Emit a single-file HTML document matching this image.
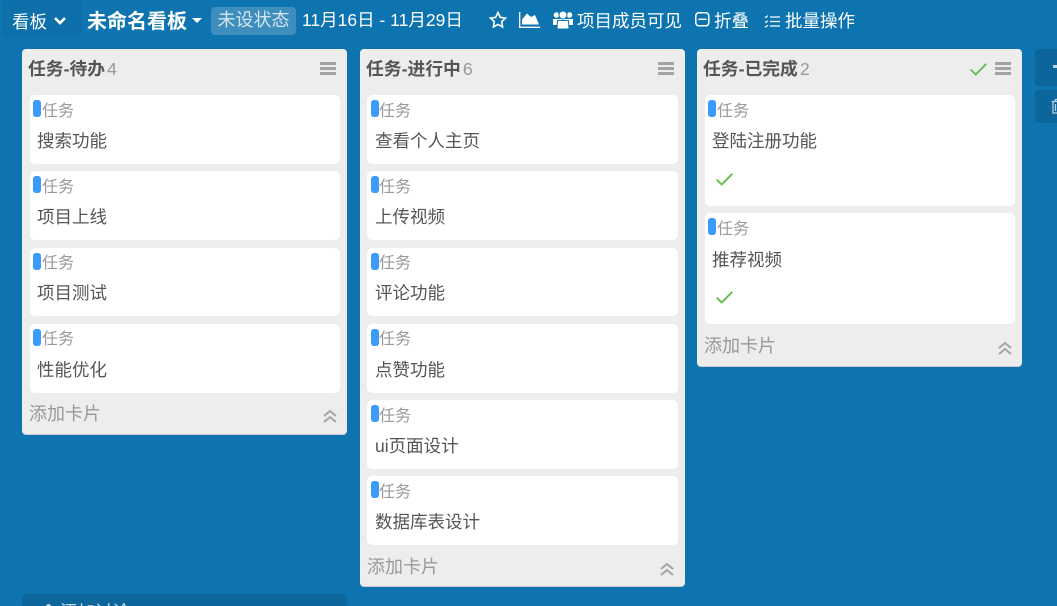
<!DOCTYPE html>
<html lang="zh"><head><meta charset="utf-8"><style>
*{box-sizing:border-box}
html,body{margin:0;padding:0;width:1057px;height:606px;overflow:hidden;background:#0d74b0;font-family:"Liberation Sans","Noto Sans CJK SC",sans-serif}
#w{position:relative;width:1057px;height:606px;overflow:hidden;background:#0d74b0}
.a{position:absolute;white-space:nowrap}
.t{color:#fff;font-size:17.5px;line-height:24px}
.col{position:absolute;width:325px;top:49px;background:#ededed;border-radius:4px;box-shadow:0 1px 0 #ccc}
.h{position:absolute;left:6px;top:8px;font-size:17.8px;line-height:24px;font-weight:bold;color:#555;white-space:nowrap}
.h span{font-weight:normal;color:#999;margin-left:2px}
.m{position:absolute;right:11px;top:13px;width:16px;height:13px;border-top:3px solid #a3a3a3;border-bottom:3px solid #a3a3a3}
.m:before{content:"";position:absolute;left:0;right:0;top:2px;height:3px;background:#a3a3a3}
.c{position:absolute;left:8px;width:310px;height:69px;background:#fff;border-radius:5px}
.c:before{content:"";position:absolute;left:3px;top:5px;width:8px;height:17px;background:#3b9bfb;border-radius:3px}
.l{position:absolute;left:12px;top:6px;font-size:16px;line-height:22px;color:#999;white-space:nowrap}
.n{position:absolute;left:7px;top:33px;font-size:17.5px;line-height:26px;color:#555;white-space:nowrap}
.add{position:absolute;left:7px;font-size:18px;line-height:24px;color:#999;white-space:nowrap}
.k .c{width:311px;left:7px}
.k .c:before{left:4px}
.k .n{left:8px}
svg{position:absolute;overflow:visible}
</style></head><body><div id="w">

<div class="a" style="left:2px;top:0;width:80px;height:38px;background:#0d70aa;border-radius:0 0 5px 5px"></div>
<div class="a t" style="left:12px;top:10px">看板</div>
<svg style="left:53px;top:16px" width="14" height="10" viewBox="0 0 14 10"><path d="M2 2l5 5 5-5" fill="none" stroke="#fff" stroke-width="2.600"/></svg>
<div class="a t" style="left:87px;top:10px;font-size:20px;font-weight:bold">未命名看板</div>
<div class="a" style="left:192px;top:18px;width:0;height:0;border-left:5px solid transparent;border-right:5px solid transparent;border-top:5px solid #fff"></div>
<div class="a" style="left:211px;top:7px;width:85px;height:28px;background:#3d8dbd;border-radius:4px;color:#d4e5f0;font-size:18px;line-height:27px;text-align:center">未设状态</div>
<div class="a t" style="left:302px;top:8px">11月16日 - 11月29日</div>

<svg style="left:489px;top:11px" width="18" height="18" viewBox="0 0 18 18"><path d="M9 1.500l2.300 4.900 5.200.7-3.800 3.600.9 5.300L9 13.400l-4.600 2.600.9-5.300L1.500 7.100l5.200-.7z" fill="none" stroke="#fff" stroke-width="1.600"/></svg>
<svg style="left:519px;top:12px" width="21" height="16" viewBox="0 0 21 16"><path d="M.7 0v15.300H21" fill="none" stroke="#fff" stroke-width="1.300"/><path d="M3 12.500V7.500L8 1.500l4 3.500 4-2 4 9.500z" fill="#fff"/></svg>
<svg style="left:553px;top:10px" width="20" height="19" viewBox="0 0 20 19"><circle cx="3.500" cy="5" r="2.800" fill="#fff"/><circle cx="16.500" cy="5" r="2.800" fill="#fff"/><path d="M0 9h20v6H0z" fill="#fff"/><circle cx="10" cy="5" r="4" fill="#fff" stroke="#0d74b0" stroke-width="1"/><path d="M4.500 10.500h11l.5 8.500H4z" fill="#fff" stroke="#0d74b0" stroke-width="1"/></svg>
<div class="a t" style="left:577px;top:9px">项目成员可见</div>
<svg style="left:695px;top:12px" width="15" height="15" viewBox="0 0 15 15"><rect x=".8" y=".8" width="13" height="13" rx="3" fill="none" stroke="#fff" stroke-width="1.500"/><path d="M3.500 7.300h8" stroke="#fff" stroke-width="1.500"/></svg>
<div class="a t" style="left:714px;top:9px">折叠</div>
<svg style="left:764px;top:14px" width="16" height="14" viewBox="0 0 16 14"><path d="M6 3h10M6 7.500h10M6 12h10" stroke="#fff" stroke-width="1.200"/><path d="M1 2.500l1 1 2-2M1 7.500l1 1 2-2M1 12l1 1 2-2" fill="none" stroke="#fff" stroke-width="1"/></svg>
<div class="a t" style="left:785px;top:9px">批量操作</div>

<!-- column 1 -->
<div class="col" style="left:22px;height:385px">
<div class="h">任务-待办<span>4</span></div><div class="m"></div>
<div class="c" style="top:46px"><div class="l">任务</div><div class="n">搜索功能</div></div>
<div class="c" style="top:122px"><div class="l">任务</div><div class="n">项目上线</div></div>
<div class="c" style="top:199px;height:68px"><div class="l" style="top:5px">任务</div><div class="n" style="top:32px">项目测试</div></div>
<div class="c" style="top:275px"><div class="l" style="top:5px">任务</div><div class="n">性能优化</div></div>
<div class="add" style="top:353px">添加卡片</div>
<svg style="left:301px;top:360px" width="14" height="14" viewBox="0 0 14 14"><path d="M1 7l6-5 6 5M1 13l6-5 6 5" fill="none" stroke="#a3a3a3" stroke-width="2"/></svg>
</div>

<!-- column 2 -->
<div class="col k" style="left:360px;height:537px">
<div class="h">任务-进行中<span>6</span></div><div class="m"></div>
<div class="c" style="top:46px"><div class="l">任务</div><div class="n">查看个人主页</div></div>
<div class="c" style="top:122px"><div class="l">任务</div><div class="n">上传视频</div></div>
<div class="c" style="top:199px;height:68px"><div class="l" style="top:5px">任务</div><div class="n" style="top:32px">评论功能</div></div>
<div class="c" style="top:275px"><div class="l" style="top:5px">任务</div><div class="n">点赞功能</div></div>
<div class="c" style="top:351px"><div class="l">任务</div><div class="n">ui页面设计</div></div>
<div class="c" style="top:427px"><div class="l">任务</div><div class="n">数据库表设计</div></div>
<div class="add" style="top:506px">添加卡片</div>
<svg style="left:300px;top:513px" width="14" height="14" viewBox="0 0 14 14"><path d="M1 7l6-5 6 5M1 13l6-5 6 5" fill="none" stroke="#a3a3a3" stroke-width="2"/></svg>
</div>

<!-- column 3 -->
<div class="col" style="left:697px;height:317px">
<div class="h">任务-已完成<span>2</span></div><div class="m"></div>
<svg style="left:273px;top:14px" width="17" height="13" viewBox="0 0 17 13"><path d="M.7 6.500l5 5L16.300.8" fill="none" stroke="#62bf4b" stroke-width="1.900"/></svg>
<div class="c" style="top:46px;height:111px"><div class="l">任务</div><div class="n">登陆注册功能</div>
<svg style="left:11px;top:78px" width="17" height="13" viewBox="0 0 17 13"><path d="M.7 6.500l5 5L16.300.8" fill="none" stroke="#62bf4b" stroke-width="1.900"/></svg></div>
<div class="c" style="top:164px;height:111px"><div class="l">任务</div><div class="n" style="top:34px">推荐视频</div>
<svg style="left:11px;top:78px" width="17" height="13" viewBox="0 0 17 13"><path d="M.7 6.500l5 5L16.300.8" fill="none" stroke="#62bf4b" stroke-width="1.900"/></svg></div>
<div class="add" style="top:285px">添加卡片</div>
<svg style="left:301px;top:292px" width="14" height="14" viewBox="0 0 14 14"><path d="M1 7l6-5 6 5M1 13l6-5 6 5" fill="none" stroke="#a3a3a3" stroke-width="2"/></svg>
</div>

<!-- right buttons -->
<div class="a" style="left:1035px;top:49px;width:40px;height:37px;background:#0c659b;border-radius:4px"></div>
<div class="a" style="left:1053px;top:65px;width:6px;height:3px;background:#bcd6e6"></div>
<div class="a" style="left:1035px;top:90px;width:40px;height:33px;background:#0c659b;border-radius:4px"></div>
<svg style="left:1051px;top:99px" width="10" height="15" viewBox="0 0 10 15"><path d="M.5 2.500H10M2 3v11h8V3M4.500 5v7M7 5v7M3.500 2.500l1-2h3l1 2" fill="none" stroke="#bcd6e6" stroke-width="1.200"/></svg>

<!-- bottom add -->
<div class="a" style="left:22px;top:594px;width:325px;height:30px;background:#0c659b;border-radius:4px"></div>
<div class="a" style="left:46px;top:604px;width:5px;height:5px;background:#c5dbe9;border-radius:50%"></div>
<div class="a" style="left:60px;top:600px;color:#c5dbe9;font-size:17.5px;line-height:24px">添加讨论</div>
</div></body></html>
